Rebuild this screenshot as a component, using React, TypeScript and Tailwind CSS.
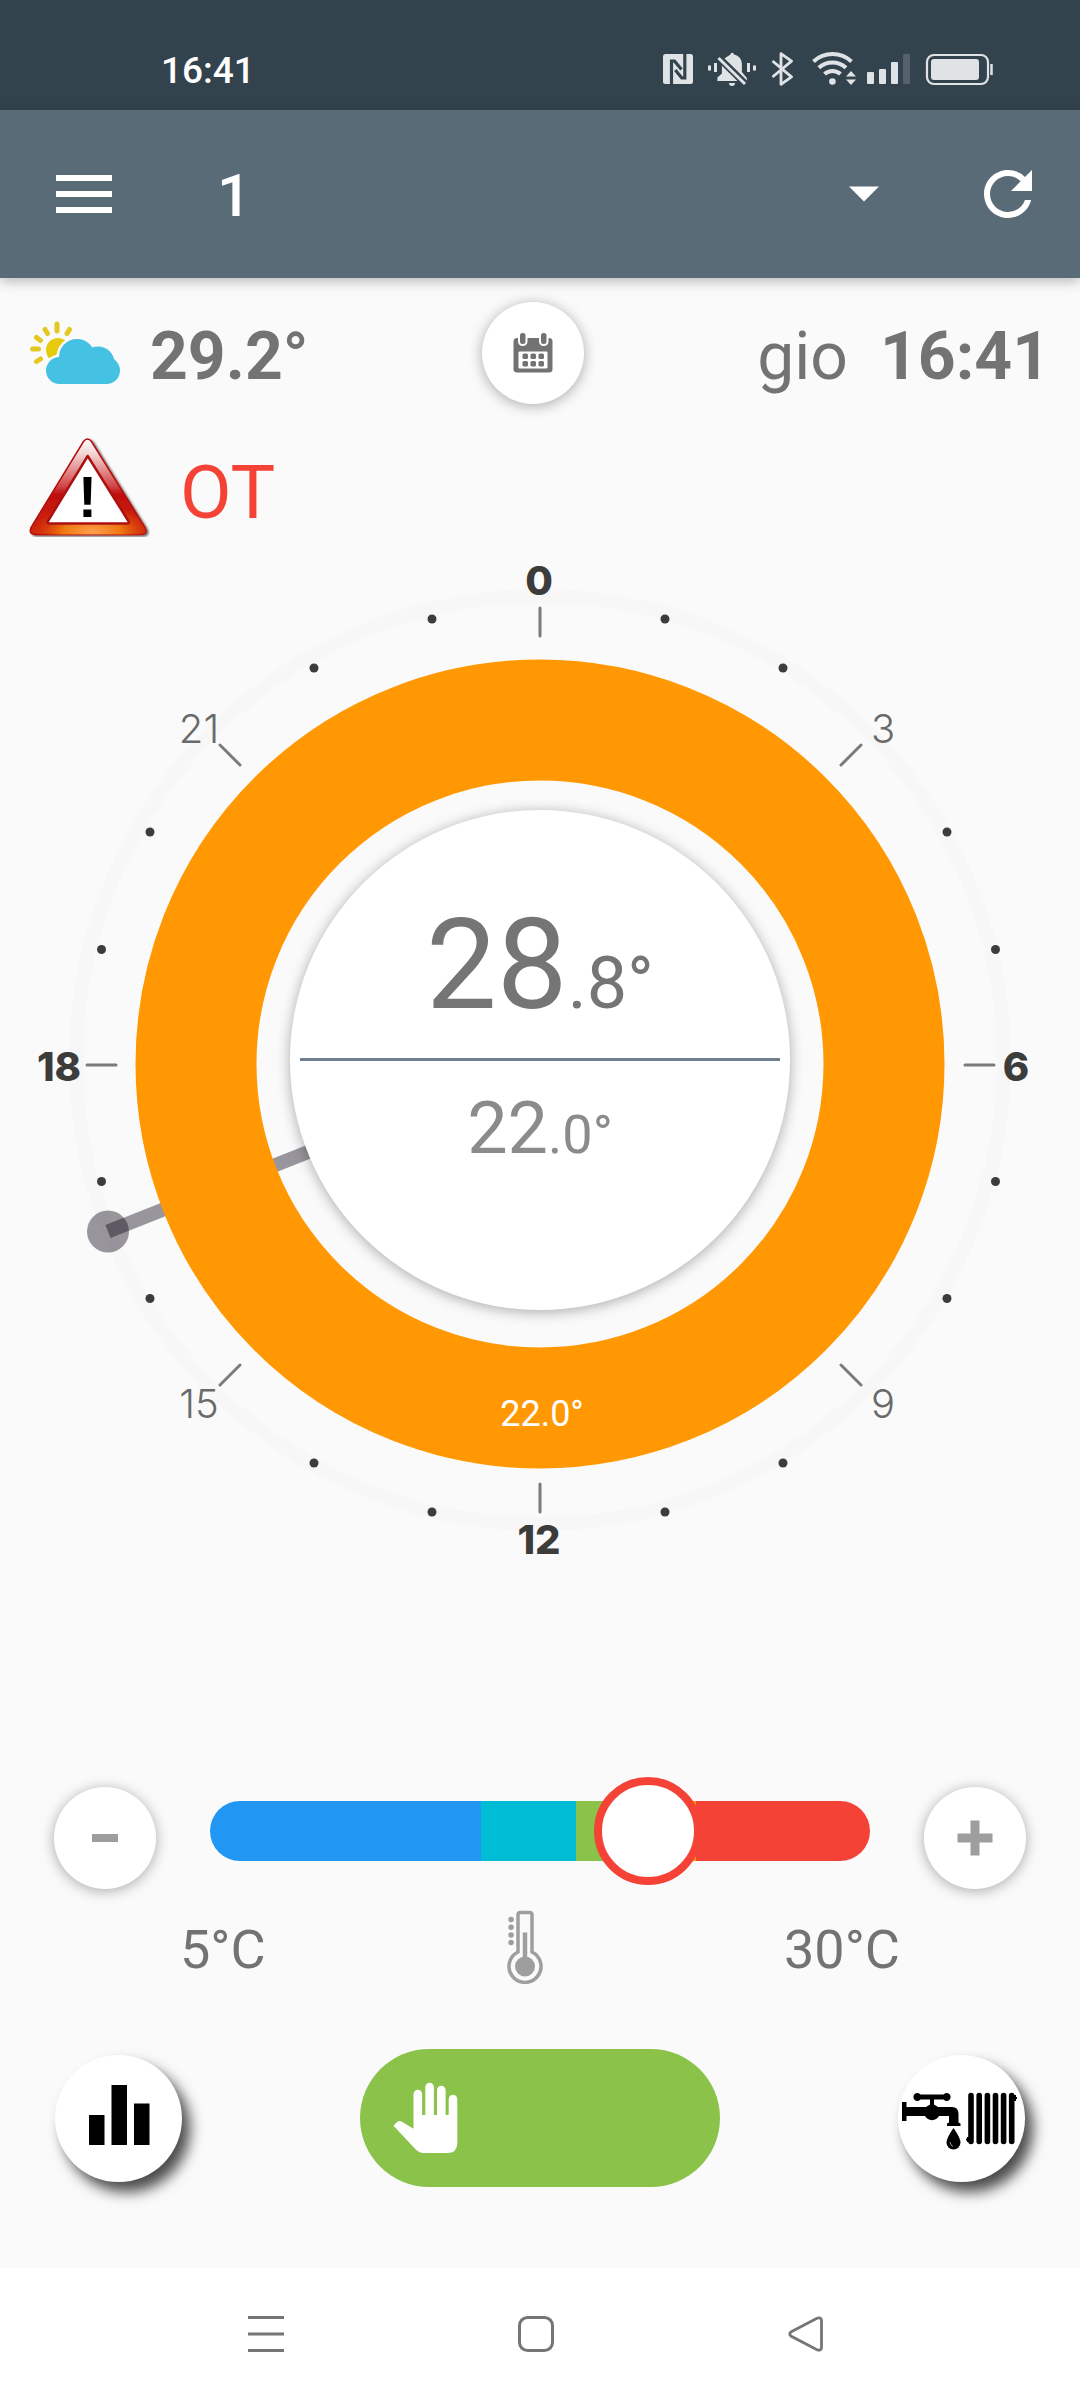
import React, { useState } from "react";
import { MdRefresh } from "react-icons/md";

const INK = "#e0e3e5";

function StatusIcons() {
  return (
    <div className="flex items-center gap-2" role="img" aria-label="NFC, silent, Bluetooth, Wi-Fi, signal, battery">
      <svg className="h-9 w-9" viewBox="662 50 36 36" fill="none">
        <rect x="663" y="54" width="30" height="30" rx="2.5" fill={INK} />
        <path d="M671.5 84.5V61h3l7 8.5M684.8 53.5V78h-3l-6.500-8" stroke="#33434d" strokeWidth="3.200" />
      </svg>
      <svg className="h-9 w-[52px]" viewBox="706 50 52 36" fill={INK}>
        <path d="M730.500 54.500a1.700 1.700 0 0 1 3.400 0c5 1 8 4.500 8 10V72l5 6v3h-29.500v-3.500l4.500-4V65l-1-1.500 3.500-5z" />
        <path d="M729 83h6a3 3 0 0 1-6 0zM708 65.500h3v5h-3zM714 63h3v9h-3zM747 63h3v9h-3zM753 65.500h3v5h-3z" />
        <path d="M716.500 55.500l30 29.500" stroke="#33434d" strokeWidth="7" />
        <path d="M718.500 58l26.500 26" stroke={INK} strokeWidth="3" />
      </svg>
      <svg className="h-9 w-[34px]" viewBox="766 50 34 36" fill="none" stroke={INK} strokeWidth="2.800" strokeLinejoin="round">
        <path d="M772.500 61l19 15.800-10.500 7.500v-30.600l10.500 7.500-19 15.800" />
      </svg>
      <svg className="h-9 w-12" viewBox="808 50 48 36" fill="none">
        <path d="M813.500 61.500a28 28 0 0 1 38 0M818.800 67.800a20 20 0 0 1 27.200 0M824.500 74a12 12 0 0 1 16 0" stroke={INK} strokeWidth="4" />
        <circle cx="832.400" cy="81.500" r="3.300" fill={INK} />
        <path d="M851 71l5 5.500h-10zM851 85l5-5.500h-10z" fill={INK} />
      </svg>
      <svg className="h-9 w-[50px]" viewBox="864 50 50 36" fill={INK}>
        <rect x="867" y="72" width="7" height="12" rx="1" />
        <rect x="879" y="69" width="7" height="15" rx="1" />
        <rect x="891" y="62" width="7" height="22" rx="1" />
        <rect x="903" y="54" width="7" height="30" rx="1" opacity=".2" />
      </svg>
      <svg className="h-9 w-[72px]" viewBox="922 50 72 36" fill="none">
        <rect x="927" y="55" width="61" height="29" rx="7" stroke={INK} strokeWidth="2.200" />
        <rect x="931" y="59" width="48" height="21" rx="3" fill={INK} />
        <path d="M991.500 64v11" stroke={INK} strokeWidth="2.500" />
      </svg>
    </div>
  );
}

function WeatherIcon() {
  return (
    <svg className="h-[66px] w-[94px]" viewBox="28 320 94 66" role="img" aria-label="Partly cloudy">
      <g stroke="#e3c822" strokeWidth="5" strokeLinecap="round">
        <path d="M57 324v7M45 329.500l2.500 4M36.500 337.500l4 3M32.500 349h6M36.500 361.500l4-2.500M69.500 329.500l-2.500 4" />
      </g>
      <circle cx="58" cy="350" r="12" fill="#e6cb0c" />
      <g fill="#45c1e4" stroke="#fafafa" strokeWidth="5">
        <circle cx="77" cy="357" r="18" />
        <circle cx="59.500" cy="370.500" r="13.500" />
      </g>
      <g fill="#45c1e4">
        <circle cx="77" cy="357" r="18" />
        <circle cx="59.500" cy="370.500" r="13.500" />
        <circle cx="98" cy="363" r="16.500" />
        <circle cx="106.500" cy="370.500" r="13.500" />
        <rect x="59" y="358" width="48" height="26" />
      </g>
    </svg>
  );
}

function WarningIcon() {
  return (
    <svg className="h-[100px] w-[122px]" viewBox="28 437 122 100" role="img" aria-label="Warning">
      <defs>
        <linearGradient id="warnRed" x1="0" y1="438" x2="0" y2="535" gradientUnits="userSpaceOnUse">
          <stop offset="0" stopColor="#fff" />
          <stop offset=".15" stopColor="#f5dada" />
          <stop offset=".5" stopColor="#d04545" />
          <stop offset=".58" stopColor="#c00d0d" />
          <stop offset="1" stopColor="#d02c08" />
        </linearGradient>
        <radialGradient id="warnGlow" cx="92" cy="533" r="58" gradientTransform="translate(0 266) scale(1 .5)" gradientUnits="userSpaceOnUse">
          <stop offset="0" stopColor="#ffa050" />
          <stop offset=".5" stopColor="#f07810" />
          <stop offset="1" stopColor="#e05008" stopOpacity="0" />
        </radialGradient>
        <filter id="warnShade" x="-10%" y="-10%" width="125%" height="125%">
          <feDropShadow dx="2" dy="1.500" stdDeviation="1" floodOpacity=".6" />
        </filter>
      </defs>
      <path filter="url(#warnShade)" d="M83.500 441.500q4-5 8 0l53.500 86q3 7-4 7h-106q-6.500 0-4-7z" fill="url(#warnRed)" stroke="#b30c0c" strokeWidth="1.500" />
      <path d="M83.500 441.500q4-5 8 0l53.500 86q3 7-4 7h-106q-6.500 0-4-7z" fill="url(#warnGlow)" />
      <path d="M87.700 456l41 65.500q.5 2-1.500 2h-78q-2 0-1.500-2z" fill="#fff" stroke="#ad1010" strokeWidth="2.500" strokeLinejoin="round" />
      <text x="87.500" y="517" textAnchor="middle" fontFamily="Liberation Sans, sans-serif" fontWeight="700" fontSize="57" fill="#000">!</text>
    </svg>
  );
}

function CalendarIcon() {
  return (
    <svg className="h-[42px] w-[42px]" viewBox="512.500 332 42 42" aria-hidden="true">
      <rect x="514" y="338" width="39" height="34.500" rx="3.500" fill="#727272" />
      <rect x="519" y="351.500" width="29" height="17" rx="1" fill="#fff" />
      <g fill="#727272">
        {[523, 531, 539].map((x) => (
          <React.Fragment key={x}>
            <rect x={x} y="353.500" width="5.500" height="5.500" rx="1.500" />
            <rect x={x} y="361" width="5.500" height="5.500" rx="1.500" />
          </React.Fragment>
        ))}
        <rect x="519.500" y="332" width="7.500" height="13" rx="3.500" stroke="#fff" strokeWidth="2" />
        <rect x="540.500" y="332" width="7.500" height="13" rx="3.500" stroke="#fff" strokeWidth="2" />
      </g>
    </svg>
  );
}

const DOTS = [
  [432, 619], [314, 668], [150, 832], [101.500, 949.500],
  [101.500, 1181.500], [150, 1298.500], [314, 1463], [432, 1512],
];

function Dial() {
  return (
    <section className="relative mx-auto w-full max-w-[1080px]" aria-label="Daily program">
      <svg className="block w-full" viewBox="0 540 1080 1040" fontFamily="Inter, sans-serif" fontSize="40">
        <circle cx="540" cy="1060" r="464" fill="none" stroke="#f7f7f7" strokeWidth="14" />
        <g fill="#3c3c3b">
          {DOTS.map(([x, y]) => (
            <React.Fragment key={`${x}-${y}`}>
              <circle cx={x} cy={y} r="4.500" />
              <circle cx={1097 - x} cy={y} r="4.500" />
            </React.Fragment>
          ))}
        </g>
        <path
          d="M540 608v28M540 1484v28M87 1065h29M965 1065h29M841 765l20-20M841 1365l20 20M220 745l20 20M220 1385l20-20"
          stroke="#7c7b7b" strokeWidth="3" strokeLinecap="round"
        />
        <g fill="#3c3c3b" fontWeight="800" textAnchor="middle">
          <text x="539" y="595">0</text>
          <text x="1016" y="1081">6</text>
          <text x="539" y="1554">12</text>
          <text x="59" y="1081">18</text>
        </g>
        <g fill="#6a6a6a" fontWeight="300" textAnchor="middle">
          <text x="883" y="743">3</text>
          <text x="883" y="1418">9</text>
          <text x="199" y="1418">15</text>
          <text x="199" y="743">21</text>
        </g>
        <circle cx="108" cy="1231.500" r="21" fill="#06000e" fillOpacity=".4" />
        <path d="M108 1231.500L540 1060" stroke="#06000e" strokeOpacity=".4" strokeWidth="14" />
        <circle cx="540" cy="1064" r="344" fill="none" stroke="#ff9802" strokeWidth="121" />
        <text x="542" y="1426" textAnchor="middle" fontFamily="Roboto, sans-serif" fontSize="36" fill="#fff">22.0°</text>
      </svg>
      <div className="absolute inset-0 flex items-center justify-center">
        <div className="flex aspect-square w-[500px] max-w-[47%] flex-col items-center rounded-full bg-white px-[10px] shadow-[0_2px_14px_rgba(0,0,0,0.32)]">
          <p className="flex h-[248px] items-baseline pt-[92px] text-[126px] leading-[126px] text-[#757575]">
            28<span className="text-[72px]">.8°</span>
          </p>
          <hr className="w-full border-t-[3px] border-[#6f7f8d]" />
          <p className="flex items-baseline pt-[32px] text-[72px] leading-[72px] text-[#8b8b8b]">
            22<span className="text-[54px]">.0°</span>
          </p>
        </div>
      </div>
    </section>
  );
}

function ThermometerIcon() {
  return (
    <svg className="h-[74px] w-[38px]" viewBox="506 1909.500 38 74" fill="none" stroke="#9e9e9e" aria-hidden="true">
      <path d="M518 1951.500v-37q0-2.500 2.500-2.500h9q2.500 0 2.500 2.500v37a16 16 0 1 1-14 0z" strokeWidth="3.500" />
      <circle cx="525" cy="1966" r="10" fill="#9e9e9e" stroke="none" />
      <path d="M525 1932v30" strokeWidth="4.500" />
      <path d="M511 1919h.1M511 1926.700h.1M511 1934.400h.1M511 1942.100h.1" strokeWidth="5.500" strokeLinecap="round" />
    </svg>
  );
}

function HandIcon() {
  return (
    <svg className="h-[72px] w-[66px]" viewBox="392 2081 66 72" fill="#fff" aria-hidden="true">
      <path d="M413.500 2127.700V2093a4.300 4.300 0 0 1 8.600 0v21h3.200v-28a4.300 4.300 0 0 1 8.600 0v28h3.100v-25a4.300 4.300 0 0 1 8.600 0v25h3.100v-16a4.300 4.300 0 0 1 8.600 0v44q0 10-10 10h-24q-4 0-8-4l-21.800-23.200 3-3.200q2-2.500 5-1.200z" />
    </svg>
  );
}

function HeatingIcon() {
  return (
    <svg className="h-16 w-[124px] shrink-0" viewBox="898 2085 124 64" aria-hidden="true">
      <path d="M900 2101h4.500v5H924l4-2.500v-5h-9.500a4 4 0 1 1 0-5h23a4 4 0 1 1 0 5H932v5l4 2.500h14q6.500 0 6.500 7v8.500l2 1v2.500h-13.500v-2.500l2-1v-6.500H937a8 8 0 0 1-14 0h-18.500v5H900z" />
      <path d="M951.500 2127q7 10 7 14.500a7 7 0 0 1-14 0q0-4.500 7-14.500z" />
      <path d="M948 2141q.5 3.500 3 4.500" stroke="#999" strokeWidth="1" fill="none" />
      <path
        d="M969 2094.500v46M977.200 2094.500v46M985.400 2094.500v46M993.500 2094.500v46M1001.600 2094.500v46M1009.700 2094.500v46"
        stroke="#000" strokeWidth="5.600" strokeLinecap="round"
      />
      <path d="M1010 2097h5M1013 2094v6M969 2138.500h-5M966 2136v5" stroke="#000" strokeWidth="2" />
    </svg>
  );
}

const roundBtn =
  "flex h-[102px] w-[102px] shrink-0 items-center justify-center rounded-full bg-white shadow-[0_2px_14px_rgba(0,0,0,0.32)]";
const modeBtn =
  "flex h-[127px] w-[127px] shrink-0 items-center justify-center rounded-full bg-white shadow-[8px_10px_14px_rgba(0,0,0,0.7)]";

export default function App() {
  const [temp, setTemp] = useState(22.4);
  return (
    <div className="flex min-h-screen flex-col bg-[#fafafa] font-['Roboto',sans-serif] text-[#737373]">
      <div className="flex h-[110px] items-center justify-between bg-[#33434d] pt-[26px] pr-[86px] pl-[161px]">
        <span className="pt-1 text-[37px] leading-none font-medium text-white">16:41</span>
        <StatusIcons />
      </div>

      <header className="relative flex h-[168px] items-center bg-[#5a6b78] pr-9 pl-14 text-white shadow-[0_3px_12px_rgba(0,0,0,0.28)]">
        <button aria-label="Menu" className="flex w-14 flex-col gap-[10px]">
          <span className="h-[6px] w-full bg-white" />
          <span className="h-[6px] w-full bg-white" />
          <span className="h-[6px] w-full bg-white" />
        </button>
        <div className="relative mr-[93px] ml-[105px] flex flex-1 items-center">
          <select aria-label="Zone" className="w-full appearance-none bg-transparent pt-1 text-[60px] leading-[80px] font-medium">
            <option>1</option>
          </select>
          <svg className="pointer-events-none absolute right-0 h-4 w-[30px]" viewBox="0 0 30 16" fill="#fff" aria-hidden="true">
            <path d="M0 .5h30l-15 15z" />
          </svg>
        </div>
        <button aria-label="Refresh">
          <MdRefresh className="h-[72px] w-[72px]" />
        </button>
      </header>

      <main className="flex flex-1 flex-col">
        <div className="flex items-center justify-between pt-6 pr-[30px] pl-7">
          <div className="flex items-center gap-7">
            <WeatherIcon />
            <span className="pt-2 text-[66px] leading-[72px] font-bold">29.2°</span>
          </div>
          <button aria-label="Schedule" className={roundBtn}>
            <CalendarIcon />
          </button>
          <div className="flex items-baseline justify-end gap-8 pt-2 text-[66px] leading-[72px]">
            <span>gio</span>
            <span className="font-bold">16:41</span>
          </div>
        </div>

        <div className="flex items-center gap-[30px] pt-[33px] pl-7">
          <WarningIcon />
          <span className="pt-[10px] text-[75px] leading-[80px] text-[#f44336]">OT</span>
        </div>

        <div className="pt-[3px]">
          <Dial />
        </div>

        <div className="flex items-center gap-[54px] px-[54px] pt-[207px]">
          <button aria-label="Decrease temperature" className={roundBtn} onClick={() => setTemp(temp - 0.5)}>
            <svg className="h-9 w-9" viewBox="0 0 36 36" fill="#9e9e9e"><path d="M5 14h26v8H5z" /></svg>
          </button>
          <input
            type="range"
            min="5"
            max="30"
            step="0.1"
            value={temp}
            aria-label="Target temperature"
            onChange={(e) => setTemp(Number(e.target.value))}
            className="mb-[14px] h-[60px] min-w-0 flex-1 appearance-none rounded-full bg-[linear-gradient(90deg,#2196f3_0_41%,#00bcd4_41%_55.5%,#8bc34a_55.5%_66%,#ff9800_66%_73.7%,#f44336_73.7%)] [&::-webkit-slider-thumb]:h-[108px] [&::-webkit-slider-thumb]:w-[108px] [&::-webkit-slider-thumb]:appearance-none [&::-webkit-slider-thumb]:rounded-full [&::-webkit-slider-thumb]:border-8 [&::-webkit-slider-thumb]:border-[#f44336] [&::-webkit-slider-thumb]:bg-white"
          />
          <button aria-label="Increase temperature" className={roundBtn} onClick={() => setTemp(temp + 0.5)}>
            <svg className="h-9 w-9" viewBox="0 0 36 36" fill="#9e9e9e"><path d="M.5 13.500H13.500V.5h9V13.500h13v9H22.500v13h-9V22.500H.5z" /></svg>
          </button>
        </div>

        <div className="flex items-start justify-between px-[180px] pt-[21px] text-[54px] leading-[80px]">
          <span>5°C</span>
          <ThermometerIcon />
          <span>30°C</span>
        </div>

        <div className="flex items-center justify-between px-[55px] pt-[59px] pb-20">
          <button aria-label="Statistics" className={modeBtn}>
            <svg className="h-[68px] w-[62px]" viewBox="88 2083 62 68" aria-hidden="true">
              <path d="M89 2114h15.500v30H89zM111.500 2084H127v60h-15.500zM134 2102.500h15.500v41.500H134z" />
            </svg>
          </button>
          <button aria-label="Manual mode" className="flex h-[138px] w-[360px] items-center rounded-full bg-[#8bc34a] pl-8">
            <HandIcon />
          </button>
          <button aria-label="Hot water and heating" className={modeBtn}>
            <HeatingIcon />
          </button>
        </div>
      </main>

      <nav className="flex h-[132px] items-center justify-center gap-[198px] bg-white pr-2" aria-label="System">
        <button aria-label="Recent apps" className="flex w-[72px] justify-center">
          <svg className="h-9 w-9" viewBox="0 0 36 36" stroke="#757575" strokeWidth="3"><path d="M0 1.500h36M0 18h36M0 34.500h36" /></svg>
        </button>
        <button aria-label="Home" className="flex w-[72px] justify-center">
          <svg className="h-9 w-9" viewBox="0 0 36 36" fill="none" stroke="#757575" strokeWidth="3"><rect x="1.500" y="1.500" width="33" height="33" rx="8" /></svg>
        </button>
        <button aria-label="Back" className="flex w-[72px] justify-center">
          <svg className="h-9 w-9" viewBox="0 0 36 36" fill="none" stroke="#757575" strokeWidth="2.800"><path d="M2.800 16L29 2.300q4-1.500 4.500 2v27.400q-.5 3.500-4.500 2L2.800 20q-2-2 0-4z" /></svg>
        </button>
      </nav>
    </div>
  );
}
